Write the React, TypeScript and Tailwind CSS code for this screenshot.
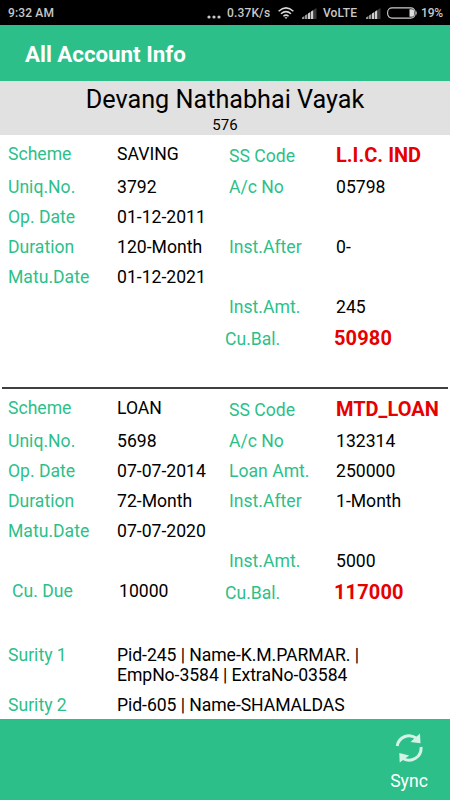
import type { ReactNode } from "react";

interface Account {
  scheme: string;
  ssCode: string;
  uniqNo: string;
  acNo: string;
  opDate: string;
  loanAmt?: string;
  duration: string;
  instAfter: string;
  matuDate: string;
  instAmt: string;
  due?: string;
  balance: string;
}

const accounts: Account[] = [
  {
    scheme: "SAVING",
    ssCode: "L.I.C. IND",
    uniqNo: "3792",
    acNo: "05798",
    opDate: "01-12-2011",
    duration: "120-Month",
    instAfter: "0-",
    matuDate: "01-12-2021",
    instAmt: "245",
    balance: "50980",
  },
  {
    scheme: "LOAN",
    ssCode: "MTD_LOAN",
    uniqNo: "5698",
    acNo: "132314",
    opDate: "07-07-2014",
    loanAmt: "250000",
    duration: "72-Month",
    instAfter: "1-Month",
    matuDate: "07-07-2020",
    instAmt: "5000",
    due: "10000",
    balance: "117000",
  },
];

const sureties = [
  { label: "Surity 1", lines: ["Pid-245 | Name-K.M.PARMAR. |", "EmpNo-3584 | ExtraNo-03584"] },
  { label: "Surity 2", lines: ["Pid-605 | Name-SHAMALDAS"] },
];

function Row({ children }: { children: ReactNode }) {
  return (
    <div className="grid h-[30px] grid-cols-[109px_112px_107px_1fr] items-center pl-2">
      {children}
    </div>
  );
}

function Label({ children }: { children?: ReactNode }) {
  return <span className="text-[#2dbf8a]">{children}</span>;
}

function AccountCard({ account: a }: { account: Account }) {
  return (
    <section className="h-[252px] whitespace-nowrap">
      <div className="grid h-[37px] grid-cols-[109px_112px_107px_1fr] items-center pl-2 pt-[2px]">
        <Label>Scheme</Label>
        <span>{a.scheme}</span>
        <span className="pt-1 text-[#2dbf8a]">SS Code</span>
        <span className="pt-px text-[20px] font-bold text-[#e60000]">{a.ssCode}</span>
      </div>
      <Row>
        <Label>Uniq.No.</Label>
        <span>{a.uniqNo}</span>
        <Label>A/c No</Label>
        <span>{a.acNo}</span>
      </Row>
      <Row>
        <Label>Op. Date</Label>
        <span>{a.opDate}</span>
        <Label>{a.loanAmt && "Loan Amt."}</Label>
        <span>{a.loanAmt}</span>
      </Row>
      <Row>
        <Label>Duration</Label>
        <span>{a.duration}</span>
        <Label>Inst.After</Label>
        <span>{a.instAfter}</span>
      </Row>
      <Row>
        <Label>Matu.Date</Label>
        <span>{a.matuDate}</span>
      </Row>
      <Row>
        <span />
        <span />
        <Label>Inst.Amt.</Label>
        <span>{a.instAmt}</span>
      </Row>
      <div className="grid h-[33px] grid-cols-[107px_106px_109px_1fr] items-center pl-3">
        <span className="pb-[3px] text-[#2dbf8a]">{a.due && "Cu. Due"}</span>
        <span className="pb-[3px]">{a.due}</span>
        <span className="pt-[2px] text-[#2dbf8a]">Cu.Bal.</span>
        <span className="text-[20px] font-bold tracking-[0.15px] text-[#e60000]">{a.balance}</span>
      </div>
    </section>
  );
}

function Signal() {
  return (
    <svg width="15" height="11" viewBox="0 0 15 11">
      <path d="M0 11V9.6L2.4 8v3zM3 11V7.6L5.4 6v5z" fill="#999" />
      <path d="M6 11V5.6L8.4 4v7zM9 11V3.6L11.4 2v9z" fill="#d0d0d0" />
      <path d="M12 11V1.6L14.5 0v11z" fill="#3a3a3a" />
    </svg>
  );
}

function StatusBar() {
  return (
    <div className="flex h-[25px] items-center bg-black pl-2 pr-[7px] pt-px text-[12px] font-medium tracking-[0.15px] text-[#c8c8c8]">
      <span className="w-[199px]">9:32 AM</span>
      <svg width="15" height="4" viewBox="0 0 15 4" className="mt-[7px]" fill="#c8c8c8">
        <circle cx="2" cy="2" r="1.6" />
        <circle cx="7" cy="2" r="1.6" />
        <circle cx="12" cy="2" r="1.6" />
      </svg>
      <span className="ml-[5px] w-[51px]">0.37K/s</span>
      <svg width="16" height="12" viewBox="0 0 16 12" fill="none" stroke="#d8d8d8" strokeWidth="1.5">
        <path d="M.6 4.2Q8-2.4 15.4 4.2M3 6.8q5-4.4 10 0M5.4 9.2Q8 7 10.6 9.2" />
        <path d="M6.5 10.2h3L8 12z" fill="#d8d8d8" stroke="none" />
      </svg>
      <span className="ml-2"><Signal /></span>
      <span className="ml-[6px] w-[38px]">VoLTE</span>
      <span className="ml-[5px]"><Signal /></span>
      <svg width="31" height="12" viewBox="0 0 31 12" className="ml-[6px]">
        <rect x=".6" y=".9" width="27.6" height="10.2" rx="4.5" fill="none" stroke="#ccc" strokeWidth="1.1" />
        <path d="M22.5 2.2H25q2.2 0 2.2 2.2v3.2q0 2.2-2.2 2.2h-2.5z" fill="#ddd" />
        <path d="M29 3.6q1.6 2.4 0 4.8z" fill="#ccc" />
      </svg>
      <span className="ml-[3px] tracking-[-0.15px]">19%</span>
    </div>
  );
}

export default function App() {
  return (
    <div className="flex h-[800px] w-[450px] flex-col overflow-hidden bg-white font-[Roboto,sans-serif] text-[17.6px] leading-[21px] text-black">
      <StatusBar />
      <header className="flex h-14 items-center bg-[#2dbf8a] pl-[25px] pt-[2px] text-[22.3px] font-bold text-white">
        All Account Info
      </header>
      <div className="h-[54px] bg-[#e1e1e1] text-center">
        <div className="pt-[3px] text-[25.2px] leading-[31px]">Devang Nathabhai Vayak</div>
        <div className="text-[15px] leading-[20px]">576</div>
      </div>
      <main className="min-h-0 flex-1 overflow-hidden">
        <AccountCard account={accounts[0]} />
        <hr className="mx-0.5 h-0.5 border-0 bg-[#404040]" />
        <AccountCard account={accounts[1]} />
        <div className="flex flex-col gap-[10px] pt-1 leading-5">
          {sureties.map((s) => (
            <div key={s.label} className="grid grid-cols-[109px_1fr] pl-2">
              <Label>{s.label}</Label>
              <div className="tracking-[-0.06px]">
                {s.lines.map((line) => (
                  <div key={line}>{line}</div>
                ))}
              </div>
            </div>
          ))}
        </div>
      </main>
      <footer className="flex h-[81px] shrink-0 justify-end bg-[#2dbf8a] pr-[18px] text-white">
        <button className="flex w-[46px] flex-col items-center pt-[14px]">
          <svg width="28" height="30" viewBox="0 0 28 30" fill="none" stroke="#d5f2e8" strokeWidth="3">
            <path d="M2.2 13A12 12 0 0 1 21 5M26 14A12 12 0 0 1 8 25.5" />
            <path d="M25 .5l.5 9.7L15.500 9zM4.300 20l.4 9.500L14.200 22.500z" fill="#d5f2e8" stroke="none" />
          </svg>
          <span className="mt-2">Sync</span>
        </button>
      </footer>
    </div>
  );
}
